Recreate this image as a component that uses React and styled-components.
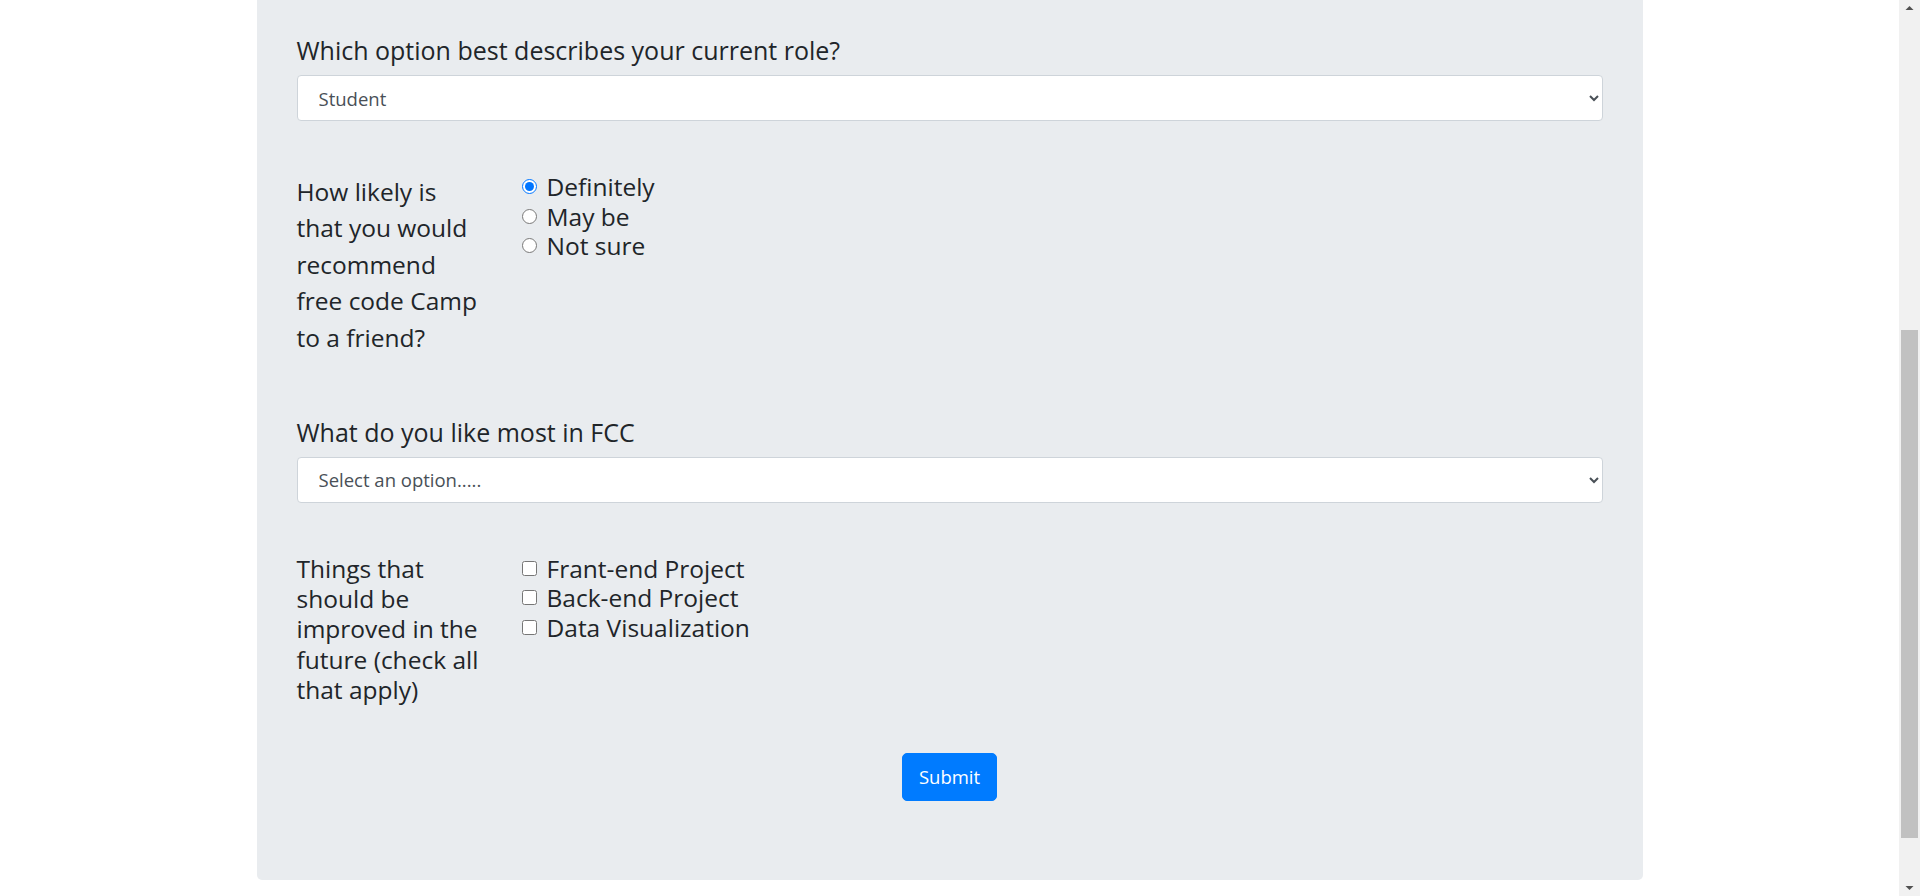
import React, { useLayoutEffect, useRef, useState } from "react";
import styled, { createGlobalStyle } from "styled-components";

const GlobalStyle = createGlobalStyle`
  html, body {
    margin: 0;
    padding: 0;
    height: 100%;
    overflow: hidden;
    background: #fff;
  }
  body {
    font-family: "Open Sans", "Noto Sans", sans-serif;
    color: #212529;
  }
  * {
    box-sizing: border-box;
  }
`;

// remaining document below the viewport (page is not scrolled to the very end)
const BELOW_FOLD = 72;
const ARROW = 17;

function App() {
  const scrollRef = useRef(null);
  const [thumb, setThumb] = useState({ top: 0, height: 0 });

  const measure = () => {
    const el = scrollRef.current;
    if (!el) return;
    const track = el.clientHeight - ARROW * 2;
    setThumb({
      top: (track * el.scrollTop) / el.scrollHeight,
      height: (track * el.clientHeight) / el.scrollHeight,
    });
  };

  useLayoutEffect(() => {
    const el = scrollRef.current;
    if (el) el.scrollTop = el.scrollHeight - el.clientHeight - BELOW_FOLD;
    measure();
  }, []);

  return (
    <>
      <GlobalStyle />
      <Page>
        <Scroller ref={scrollRef} onScroll={measure}>
          <Container>
            <Jumbotron>
              <Title>Survey Form</Title>
              <Description>Thank you for taking the time to help us improve the platform</Description>

              <FormGroup $space={52}>
                <Heading htmlFor="name">Name</Heading>
                <TextInput id="name" type="text" placeholder="Enter your name" />
              </FormGroup>
              <FormGroup $space={52}>
                <Heading htmlFor="email">Email</Heading>
                <TextInput id="email" type="email" placeholder="Enter your Email" />
              </FormGroup>
              <FormGroup $space={52}>
                <Heading htmlFor="number">Age</Heading>
                <TextInput id="number" type="number" placeholder="Age" />
              </FormGroup>

              <FormGroup $space={52.5}>
                <Heading htmlFor="dropdown">Which option best describes your current role?</Heading>
                <Select id="dropdown" defaultValue="student">
                  <option value="student">Student</option>
                  <option value="job">Full Time Job</option>
                  <option value="learner">Full Time Learner</option>
                  <option value="other">Other</option>
                </Select>
              </FormGroup>

              <FormRow $space={57.2}>
                <SideLabel $lh={36.6}>
                  How likely is that you would recommend free code Camp to a friend?
                </SideLabel>
                <Options $shift={-1.3}>
                  <Option>
                    <input type="radio" name="recommend" value="definitely" defaultChecked />
                    <span>Definitely</span>
                  </Option>
                  <Option>
                    <input type="radio" name="recommend" value="maybe" />
                    <span>May be</span>
                  </Option>
                  <Option>
                    <input type="radio" name="recommend" value="not-sure" />
                    <span>Not sure</span>
                  </Option>
                </Options>
              </FormRow>

              <FormGroup $space={51}>
                <Heading htmlFor="most-like">What do you like most in FCC</Heading>
                <Select id="most-like" defaultValue="">
                  <option value="" disabled>
                    Select an option.....
                  </option>
                  <option value="challenges">Challenges</option>
                  <option value="projects">Projects</option>
                  <option value="community">Community</option>
                </Select>
              </FormGroup>

              <FormRow $space={48}>
                <SideLabel $lh={30.3}>
                  Things that should be improved in the future (check all that apply)
                </SideLabel>
                <Options $shift={0}>
                  <Option>
                    <input type="checkbox" value="front-end" />
                    <span>Frant-end Project</span>
                  </Option>
                  <Option>
                    <input type="checkbox" value="back-end" />
                    <span>Back-end Project</span>
                  </Option>
                  <Option>
                    <input type="checkbox" value="data-vis" />
                    <span>Data Visualization</span>
                  </Option>
                </Options>
              </FormRow>

              <SubmitRow>
                <SubmitButton type="submit">Submit</SubmitButton>
              </SubmitRow>
            </Jumbotron>
          </Container>
        </Scroller>

        <ScrollBar>
          <ArrowButton>
            <svg width="21" height={ARROW} viewBox="0 0 21 17">
              <polygon points="6.5,10 10.5,6 14.5,10" fill="#505050" />
            </svg>
          </ArrowButton>
          <Track>
            <Thumb style={{ marginTop: thumb.top, height: thumb.height }} />
          </Track>
          <ArrowButton>
            <svg width="21" height={ARROW} viewBox="0 0 21 17">
              <polygon points="6.5,7 10.5,11 14.5,7" fill="#505050" />
            </svg>
          </ArrowButton>
        </ScrollBar>
      </Page>
    </>
  );
}

export default App;

const Page = styled.div`
  display: flex;
  height: 100vh;
`;

const Scroller = styled.div`
  flex: 1;
  min-width: 0;
  overflow-y: scroll;
  scrollbar-width: none;

  &::-webkit-scrollbar {
    display: none;
  }
`;

const ScrollBar = styled.div`
  display: flex;
  flex-direction: column;
  width: 21px;
  flex-shrink: 0;
  background: #f1f1f1;
`;

const ArrowButton = styled.div`
  height: ${ARROW}px;
  flex-shrink: 0;

  svg {
    display: block;
  }
`;

const Track = styled.div`
  flex: 1;
  padding: 0 2px;
`;

const Thumb = styled.div`
  background: #c1c1c1;
`;

const Container = styled.div`
  width: 1386px;
  margin: 0 auto;
  padding: 0 0 88px;
`;

const Jumbotron = styled.form`
  background: #e9ecef;
  border-radius: 5px;
  padding: 30px 40px 79px;
`;

const Title = styled.h1`
  margin: 0 0 13px;
  font-size: 40px;
  font-weight: 500;
  line-height: 48px;
  text-align: center;
`;

const Description = styled.p`
  margin: 0 0 40px;
  font-size: 20px;
  line-height: 30px;
  text-align: center;
`;

const FormGroup = styled.div`
  margin-bottom: ${(p) => p.$space}px;
`;

const Heading = styled.label`
  display: block;
  margin-bottom: 7px;
  font-size: 25px;
  line-height: 36px;
`;

const fieldStyles = `
  display: block;
  width: 100%;
  height: 46px;
  padding: 0 17px;
  font-family: "Open Sans", "Noto Sans", sans-serif;
  font-size: 18.5px;
  color: #495057;
  background-color: #fff;
  border: 1px solid #ced4da;
  border-radius: 4px;
  outline: none;
`;

const TextInput = styled.input`
  ${fieldStyles}
`;

const Select = styled.select`
  ${fieldStyles}
`;

const FormRow = styled.div`
  display: flex;
  align-items: flex-start;
  margin-bottom: ${(p) => p.$space}px;
`;

const SideLabel = styled.div`
  width: 190px;
  flex-shrink: 0;
  font-size: 24.5px;
  line-height: ${(p) => p.$lh}px;
`;

const Options = styled.div`
  display: flex;
  flex-direction: column;
  margin: ${(p) => p.$shift}px 0 0 35px;
`;

const Option = styled.label`
  display: flex;
  align-items: center;
  gap: 10px;
  font-size: 24.5px;
  line-height: 29.5px;

  input {
    width: 15px;
    height: 15px;
    margin: 0;
  }
`;

const SubmitRow = styled.div`
  display: flex;
  justify-content: center;
`;

const SubmitButton = styled.button`
  padding: 8px 16px;
  font-family: "Open Sans", "Noto Sans", sans-serif;
  font-size: 18.5px;
  line-height: 30px;
  color: #fff;
  background-color: #007bff;
  border: 1px solid #007bff;
  border-radius: 5px;
  cursor: pointer;
`;
